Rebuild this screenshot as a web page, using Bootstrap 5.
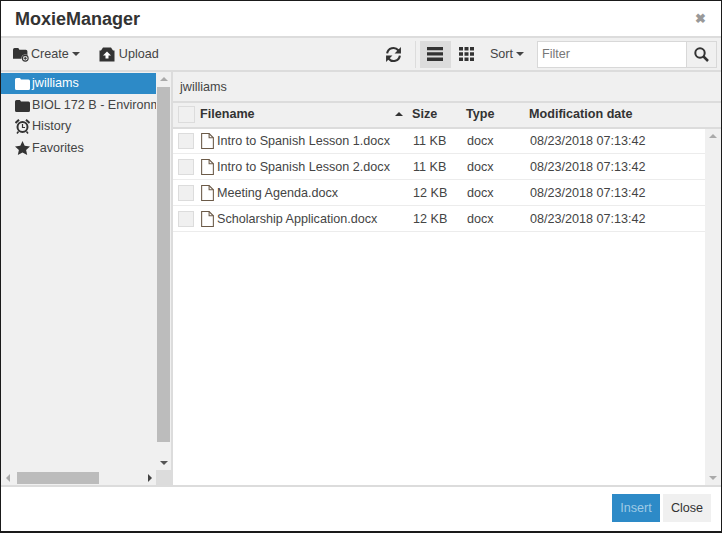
<!DOCTYPE html>
<html><head><meta charset="utf-8">
<link href="https://cdn.jsdelivr.net/npm/bootstrap@5.3.0/dist/css/bootstrap.min.css" rel="stylesheet">
<style>
html,body{height:533px;overflow:hidden;background:#fff}
body{font-family:"Liberation Sans",Arial,sans-serif;font-size:12.6px;color:#333}
.mx-win{width:722px;height:533px;border:1px solid #1a1a1a;border-width:1px 1px 2px 1px;display:flex;flex-direction:column;background:#fff}
.mx-head{height:37px;flex:none;border-bottom:2px solid #dcdcdc;padding:0 13px 0 14px}
.mx-title{font-size:18px;font-weight:700;color:#333;line-height:1}
.mx-x{font-size:13px;font-weight:700;color:#999;line-height:1;width:13px}
.mx-tools{height:34px;flex:none;background:#f0f0f0;border-bottom:2px solid #dcdcdc;padding-left:12px;padding-right:4px}
.mx-tool{font-size:12.6px;color:#444;gap:3px;line-height:1;white-space:nowrap}
.mx-tool-up{margin-left:19px;gap:4px}
.mx-create svg{margin-right:-1px}
.mx-caret{display:inline-block;border-left:4px solid transparent;border-right:4px solid transparent;border-top:4px solid #444;margin-left:0}
.mx-sq{width:31px;height:27px;display:flex;align-items:center;justify-content:center}
.mx-on{background:#dcdcdc;margin-left:4px}
.mx-vr{width:1px;height:27px;background:#dcdcdc;margin-left:6px}
.mx-sort{margin-left:8px;margin-right:13px}
.mx-filter{width:149px;height:27px;background:#fff;border:1px solid #d8d8d8;border-right:0;padding-left:4px;font-size:12.6px;color:#777;line-height:25px}
.mx-search{width:31px;height:27px;background:#f0f0f0;border:1px solid #d8d8d8;display:flex;align-items:center;justify-content:center}
.mx-main{flex:1;min-height:0;display:flex}
.mx-side{width:172px;flex:none;background:#f0f0f0;border-right:2px solid #dcdcdc;display:flex;flex-direction:column}
.mx-tree{flex:1;min-height:0;display:flex}
.mx-list{width:155px;flex:none;padding-top:1px;overflow:hidden}
.mx-item{height:21.5px;display:flex;align-items:center;padding-left:14px;padding-top:1px;gap:2px;white-space:nowrap;font-size:12.6px;color:#444}
.mx-item svg{flex:none}
.mx-sel{background:#2d8ac7;color:#fff;height:21px;padding-top:0}
.mx-vs{width:15px;flex:none;position:relative;display:flex;flex-direction:column;align-items:center;background:#f0f0f0}
.mx-thumb{width:13px;background:#bcbcbc;flex:1;margin:15px 0 28px}
.mx-hs{height:15px;flex:none;display:flex;align-items:center;background:#f0f0f0}
.mx-hthumb{width:82px;height:12px;background:#bcbcbc;margin-left:16px}
.mx-corner{width:15px;height:15px;background:#dcdcdc;margin-left:auto}
.mx-tri{position:absolute;width:0;height:0;border-left:4px solid transparent;border-right:4px solid transparent}
.mx-up{border-bottom:4px solid #aaa;top:5px}
.mx-down{border-top:4px solid #555;bottom:5px}
.mx-left{left:5px;border:4px solid transparent;border-right-color:#aaa;border-left:0}
.mx-right{left:147px;border:4px solid transparent;border-left-color:#444;border-right:0}
.mx-sortup{display:block;width:0;height:0;border-left:4px solid transparent;border-right:4px solid transparent;border-bottom:4px solid #333;margin-left:auto;margin-right:9px}
.mx-content{flex:1;min-width:0;display:flex;flex-direction:column}
.mx-path{height:31px;flex:none;background:#f0f0f0;border-bottom:2px solid #dcdcdc;padding-left:7px;line-height:30px;font-size:12.6px;color:#444}
.mx-cols{height:26px;flex:none;background:#f0f0f0;border-bottom:2px solid #dcdcdc;padding-bottom:1px;display:flex;align-items:center;font-weight:700;color:#333;font-size:12.6px}
.mx-row{height:26px;flex:none;border-bottom:1px solid #ececec;display:flex;align-items:center;color:#444;font-size:12.6px;white-space:nowrap;padding-top:1px}
.mx-row:first-child{height:25px;padding-top:0}
.mx-c0{width:27px;flex:none;padding-left:5px}
.mx-c1{width:212px;flex:none;display:flex;align-items:center;gap:2px}
.mx-row .mx-c1{width:213px}
.mx-c2{width:54px;flex:none}
.mx-c3{width:63px;flex:none}
.mx-box{display:block;width:16px;height:16px;background:#f0f0f0;border:1px solid #dcdcdc}
.mx-boxh{width:17px;height:17px}
.mx-rows{flex:1;min-height:0;display:flex}
.mx-rowlist{flex:1;min-width:0}
.mx-rs{width:16px;flex:none;background:#f0f0f0;position:relative;display:flex;justify-content:center}
.mx-downl{border-top-color:#aaa}
.mx-foot{height:46px;flex:none;border-top:2px solid #dcdcdc;padding-right:10px;gap:3px;padding-bottom:2px}
.mx-b{height:28px;line-height:28px;font-size:12.6px;text-align:center}
.mx-ins{background:#2d8ac7;color:#9fcbe6;width:48px}
.mx-close{background:#f0f0f0;color:#333;width:48px}
.mx-doc{stroke:#6b5a48}
</style></head><body>
<div class="mx-win">
 <div class="mx-head d-flex align-items-center justify-content-between">
  <span class="mx-title">MoxieManager</span><span class="mx-x">&#10006;</span>
 </div>
 <div class="mx-tools d-flex align-items-center">
  <span class="mx-tool mx-create d-flex align-items-center">
   <svg width="16" height="15" viewBox="0 0 15 14"><path d="M0 2.500Q0 1 1.500 1H5l1 1.500h6q1.500 0 1.500 1.500V11H0z" fill="#333"/><circle cx="11.500" cy="10.500" r="3.500" fill="#f0f0f0"/><circle cx="11.500" cy="10.500" r="2.700" fill="none" stroke="#333"/><path d="M10 10.500h3M11.500 9v3" stroke="#333"/></svg>
   Create <i class="mx-caret"></i></span>
  <span class="mx-tool mx-tool-up d-flex align-items-center">
   <svg width="16" height="15" viewBox="0 0 16 14"><path d="M2 3l2-3h8l2 3h1.500v11H.5V3z" fill="#333"/><path d="M8 4l4 4h-2.500v3h-3V8H4z" fill="#fff"/></svg>
   Upload</span>
  <span class="ms-auto mx-sq">
   <svg width="17" height="17" viewBox="0 0 16 16" fill="none" stroke="#333" stroke-width="2"><path d="M2 7a6 6 0 0 1 10.500-3L14 5.500"/><path d="M14 9a6 6 0 0 1-10.500 3L2 10.500"/><path d="M15 1v6h-6z" fill="#333" stroke="none"/><path d="M1 15V9h6z" fill="#333" stroke="none"/></svg>
  </span>
  <span class="mx-vr"></span>
  <span class="mx-sq mx-on">
   <svg width="16" height="14" viewBox="0 0 16 14" fill="#333"><path d="M0 0h16v3.300H0zM0 5.300h16v3.300H0zM0 10.600h16V14H0z"/></svg>
  </span>
  <span class="mx-sq">
   <svg width="15" height="14" viewBox="0 0 15 14" fill="#333"><path d="M0 0h4v3.500H0zM5.500 0h4v3.500h-4zM11 0h4v3.500h-4zM0 5.200h4v3.500H0zM5.500 5.200h4v3.500h-4zM11 5.200h4v3.500h-4zM0 10.500h4V14H0zM5.500 10.500h4V14h-4zM11 10.500h4V14h-4z"/></svg>
  </span>
  <span class="mx-tool mx-sort d-flex align-items-center">Sort <i class="mx-caret"></i></span>
  <span class="mx-filter">Filter</span>
  <span class="mx-search">
   <svg width="15" height="15" viewBox="0 0 15 15" fill="none" stroke="#333" stroke-width="2"><circle cx="6" cy="6" r="4.700"/><path d="M9.500 9.500L14 14" stroke-width="2.500"/></svg>
  </span>
 </div>
 <div class="mx-main">
  <div class="mx-side">
   <div class="mx-tree">
    <div class="mx-list">
     <div class="mx-item mx-sel"><svg width="15" height="13" viewBox="0 0 15 13" fill="#fff"><path d="M0 2.500Q0 1 1.500 1H5l1 1.500h7.500Q15 2.500 15 4v7.500Q15 13 13.500 13h-12Q0 13 0 11.500z"/></svg>jwilliams</div>
     <div class="mx-item"><svg width="15" height="13" viewBox="0 0 15 13" fill="#333"><path d="M0 2.500Q0 1 1.500 1H5l1 1.500h7.500Q15 2.500 15 4v7.500Q15 13 13.500 13h-12Q0 13 0 11.500z"/></svg>BIOL 172 B - Environmental Science</div>
     <div class="mx-item"><svg width="15" height="15" viewBox="0 0 15 15" fill="none" stroke="#333"><circle cx="7.500" cy="8" r="5" stroke-width="2"/><path d="M7.500 5v3.500h2.500" stroke-width="1.200"/><path d="M0.500 4L4 .8M14.500 4L11 .8" stroke-width="2"/><path d="M3.500 12.500L2 14.500M11.500 12.500l1.500 2" stroke-width="1.500"/></svg>History</div>
     <div class="mx-item"><svg width="15" height="14" viewBox="0 0 15 14" fill="#333"><path d="M7.500 0l2.200 4.800 5.300.6-3.900 3.500 1.100 5.100-4.700-2.600L2.800 14l1.100-5.100L0 5.400l5.300-.6z"/></svg>Favorites</div>
    </div>
    <div class="mx-vs"><i class="mx-tri mx-up"></i><div class="mx-thumb"></div><i class="mx-tri mx-down"></i></div>
   </div>
   <div class="mx-hs position-relative">
    <i class="mx-tri mx-left"></i>
    <div class="mx-hthumb"></div>
    <i class="mx-tri mx-right"></i>
    <div class="mx-corner"></div>
   </div>
  </div>
  <div class="mx-content">
   <div class="mx-path">jwilliams</div>
   <div class="mx-cols">
    <div class="mx-c0"><span class="mx-box mx-boxh"></span></div>
    <div class="mx-c1">Filename<i class="mx-sortup"></i></div>
    <div class="mx-c2">Size</div><div class="mx-c3">Type</div><div>Modification date</div>
   </div>
   <div class="mx-rows">
    <div class="mx-rowlist">
     <div class="mx-row"><div class="mx-c0"><span class="mx-box"></span></div><div class="mx-c1"><svg class="mx-doc" width="15" height="16" viewBox="0 0 14 15" fill="none"><path d="M1.500.5h7l4 4v10h-11z"/><path d="M8.500.5v4h4"/></svg>Intro to Spanish Lesson 1.docx</div><div class="mx-c2">11 KB</div><div class="mx-c3">docx</div><div>08/23/2018 07:13:42</div></div>
     <div class="mx-row"><div class="mx-c0"><span class="mx-box"></span></div><div class="mx-c1"><svg class="mx-doc" width="15" height="16" viewBox="0 0 14 15" fill="none"><path d="M1.500.5h7l4 4v10h-11z"/><path d="M8.500.5v4h4"/></svg>Intro to Spanish Lesson 2.docx</div><div class="mx-c2">11 KB</div><div class="mx-c3">docx</div><div>08/23/2018 07:13:42</div></div>
     <div class="mx-row"><div class="mx-c0"><span class="mx-box"></span></div><div class="mx-c1"><svg class="mx-doc" width="15" height="16" viewBox="0 0 14 15" fill="none"><path d="M1.500.5h7l4 4v10h-11z"/><path d="M8.500.5v4h4"/></svg>Meeting Agenda.docx</div><div class="mx-c2">12 KB</div><div class="mx-c3">docx</div><div>08/23/2018 07:13:42</div></div>
     <div class="mx-row"><div class="mx-c0"><span class="mx-box"></span></div><div class="mx-c1"><svg class="mx-doc" width="15" height="16" viewBox="0 0 14 15" fill="none"><path d="M1.500.5h7l4 4v10h-11z"/><path d="M8.500.5v4h4"/></svg>Scholarship Application.docx</div><div class="mx-c2">12 KB</div><div class="mx-c3">docx</div><div>08/23/2018 07:13:42</div></div>
    </div>
    <div class="mx-rs"><i class="mx-tri mx-up"></i><i class="mx-tri mx-down mx-downl"></i></div>
   </div>
  </div>
 </div>
 <div class="mx-foot d-flex align-items-center justify-content-end">
  <span class="mx-b mx-ins">Insert</span><span class="mx-b mx-close">Close</span>
 </div>
</div>
<script src="https://cdn.jsdelivr.net/npm/bootstrap@5.3.0/dist/js/bootstrap.bundle.min.js"></script>
</body></html>
